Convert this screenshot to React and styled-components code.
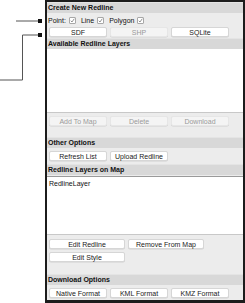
import React from 'react';
import styled, { createGlobalStyle } from 'styled-components';

const GlobalStyle = createGlobalStyle`
	html, body {
		margin: 0;
		padding: 0;
		background: #ffffff;
	}
	body {
		font-family: "Liberation Sans", Arial, sans-serif;
	}
`;

const Page = styled.div`
	display: flex;
	width: 245px;
	height: 303px;
	overflow: hidden;
`;

const Leaders = styled.svg`
	flex: 0 0 45px;
	width: 45px;
	height: 303px;
`;

const Panel = styled.div`
	box-sizing: border-box;
	width: 200px;
	height: 303px;
	border: 2px solid #1c1c1c;
	border-bottom-width: 3px;
	background: #ececec;
	display: flex;
	flex-direction: column;
	font-size: 7px;
	color: #111;
`;

const Header = styled.div`
	height: 10px;
	line-height: 10px;
	padding: 0 1px;
	margin-top: ${ p => p.top || 0 }px;
	background: #d8d8d8;
	font-weight: bold;
	border-top: 1px solid #e4e4e4;
`;

const Row = styled.div`
	display: flex;
	align-items: center;
	gap: 3px;
	padding: 0 2px;
	margin-top: ${ p => p.top || 3 }px;
`;

const Button = styled.div`
	box-sizing: border-box;
	width: ${ p => p.wide ? 76 : 58 }px;
	height: 10px;
	line-height: 9px;
	text-align: center;
	background: ${ p => p.disabled ? '#f4f4f4' : '#ffffff' };
	color: ${ p => p.disabled ? '#9a9a9a' : '#1a1a1a' };
	border: 1px solid ${ p => p.disabled ? '#e6e6e6' : '#d6d6d6' };
	border-radius: 2px;
	box-shadow: 0 0.5px 0 rgba(0, 0, 0, 0.12);
`;

const CheckRow = styled.div`
	display: flex;
	align-items: center;
	gap: 3px;
	height: 12px;
	padding: 0 1px;
	margin-top: 1px;
`;

const Box = styled.span`
	box-sizing: border-box;
	display: inline-flex;
	align-items: center;
	justify-content: center;
	width: 7px;
	height: 7px;
	border: 1px solid #a8a8a8;
	border-radius: 1px;
	background: #fff;
	margin-right: 2px;
	svg {
		width: 5px;
		height: 5px;
	}
`;

const List = styled.div`
	box-sizing: border-box;
	height: ${ p => p.h }px;
	margin-top: ${ p => p.top || 0 }px;
	background: #ffffff;
	border-top: 1px solid ${ p => p.framed ? '#9a9a9a' : '#ffffff' };
	border-bottom: 1px solid #c8c8c8;
	padding: 3px 2px;
`;

const Check = () => (
		<Box>
			<svg viewBox='0 0 10 10'>
				<path d='M1.5 5.5 L4 8 L8.5 1.5'
							fill='none'
							stroke='#666'
							strokeWidth='1.4'/>
			</svg>
		</Box>
);

const App = () => (
		<>
			<GlobalStyle/>
			<Page>
				<Leaders viewBox='0 0 45 303'>
					<line x1='16' y1='21' x2='40' y2='21' stroke='#555' strokeWidth='1'/>
					<rect x='38' y='19' width='4' height='4' fill='#111'/>
					<polyline points='0,80 22.5,80 22.5,35 40,35' fill='none' stroke='#555' strokeWidth='1'/>
					<rect x='38' y='33' width='4' height='4' fill='#111'/>
				</Leaders>
				<Panel>
					<Header>Create New Redline</Header>
					<CheckRow>
						<span>Point:</span><Check/>
						<span>Line</span><Check/>
						<span>Polygon</span><Check/>
					</CheckRow>
					<Row top={ 1 }>
						<Button>SDF</Button>
						<Button disabled>SHP</Button>
						<Button>SQLite</Button>
					</Row>
					<Header top={ 1 }>Available Redline Layers</Header>
					<List h={ 64 }/>
					<Row>
						<Button disabled>Add To Map</Button>
						<Button disabled>Delete</Button>
						<Button disabled>Download</Button>
					</Row>
					<Header top={ 11 }>Other Options</Header>
					<Row>
						<Button>Refresh List</Button>
						<Button>Upload Redline</Button>
					</Row>
					<Header top={ 3 }>Redline Layers on Map</Header>
					<List h={ 59 } top={ 1 } framed>RedlineLayer</List>
					<Row top={ 4 }>
						<Button wide>Edit Redline</Button>
						<Button wide>Remove From Map</Button>
					</Row>
					<Row>
						<Button wide>Edit Style</Button>
					</Row>
					<Header top={ 12 }>Download Options</Header>
					<Row>
						<Button>Native Format</Button>
						<Button>KML Format</Button>
						<Button>KMZ Format</Button>
					</Row>
				</Panel>
			</Page>
		</>
);

export default App;
